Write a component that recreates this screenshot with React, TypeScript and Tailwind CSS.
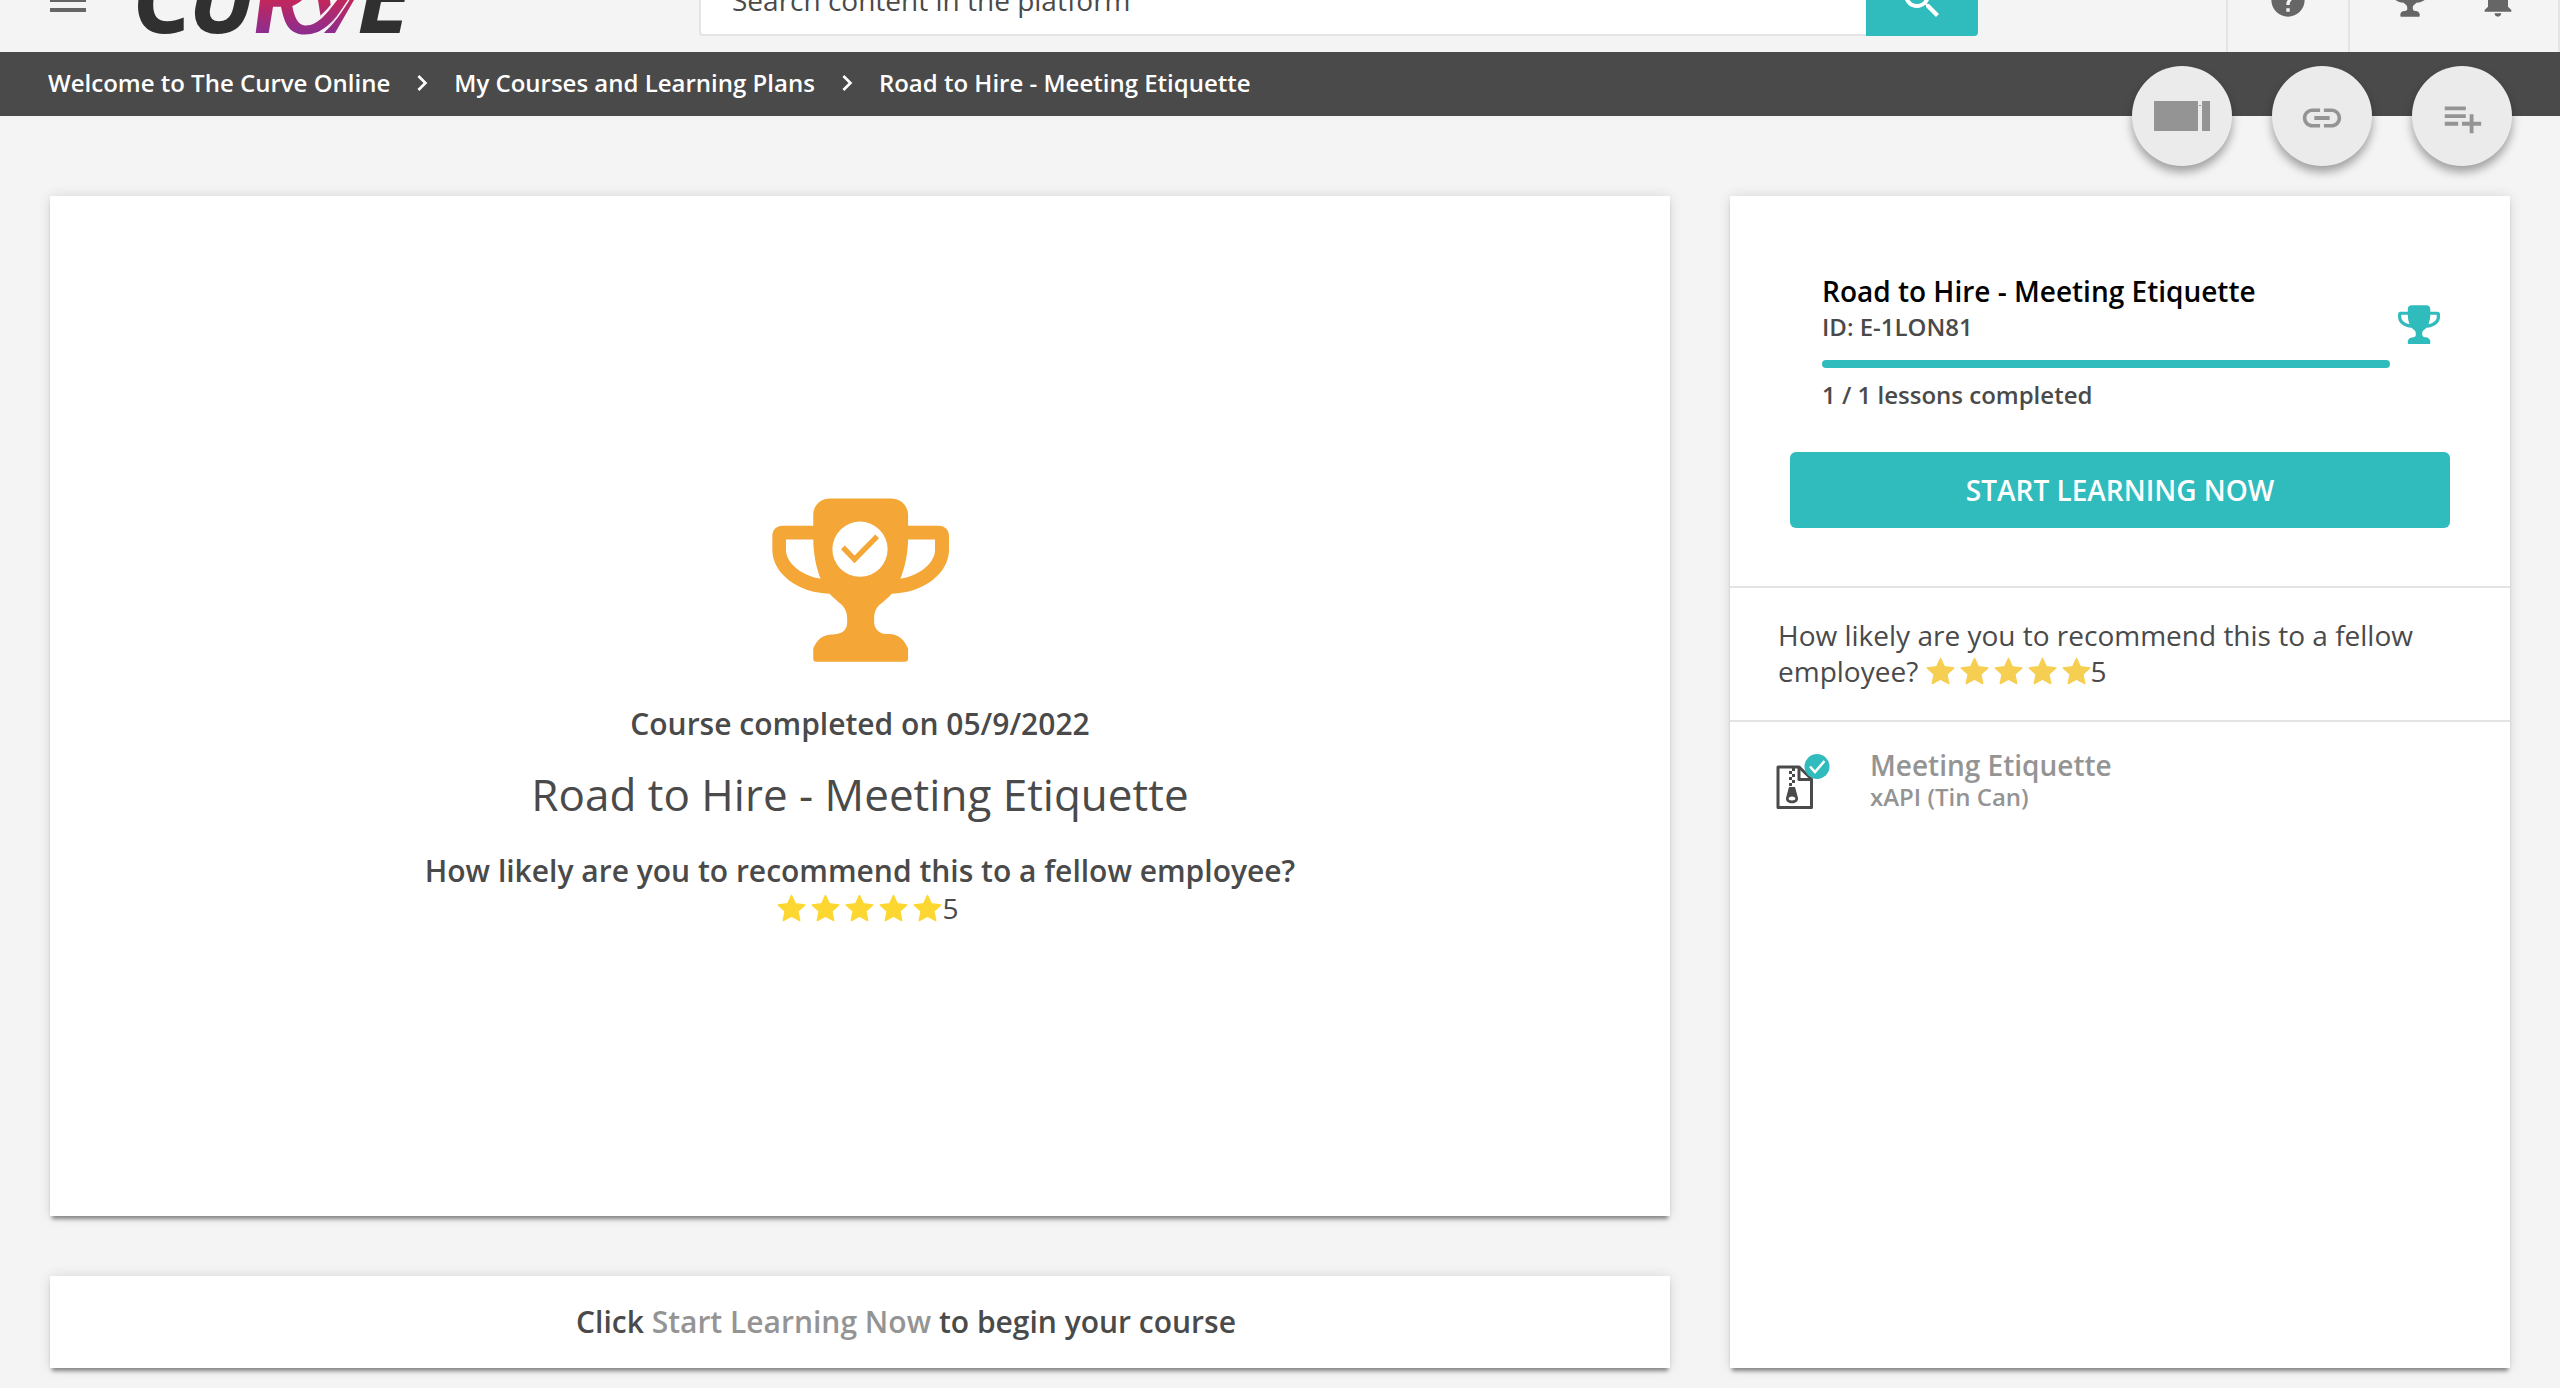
import React from "react";
import { MdMenu, MdSearch, MdHelp, MdNotifications, MdChevronRight, MdLink, MdPlaylistAdd } from "react-icons/md";

const CARD =
  "bg-white shadow-[0_5px_4px_-2px_rgba(0,0,0,0.42),0_0_12px_rgba(0,0,0,0.12)]";

function Trophy({ className, checked = false }: { className: string; checked?: boolean }) {
  return (
    <svg viewBox="94 57 532 492" className={className} fill="currentColor" aria-hidden="true">
      <path
        fillRule="evenodd"
        d="M218 140V108C218 78 240 58 270 58H450C480 58 503 78 503 108V140H596C613 140 626 153 626 170V212C626 284 548 342 454 344C442 358 428 368 418 377C405 390 401 402 401 420V430C401 450 417 465 436 465H446C473 465 492 482 503 509V540Q503 549 494 549H227Q218 549 218 540V509C229 482 248 467 275 467L288 465C308 464 320 450 320 430V420C320 402 314 388 303 377C293 368 280 358 267 344C173 342 95 284 95 212V170C95 153 108 140 125 140ZM136 181V212C136 252 182 290 240 299C226 262 219 226 218 181ZM503 181C502 226 494 262 480 299C538 290 584 252 584 212V181Z"
      />
      {checked && (
        <>
          <circle cx="358.500" cy="210.500" r="83" className="fill-white" />
          <path d="M307 205L342 241L410 172" fill="none" stroke="currentColor" strokeWidth="16" />
        </>
      )}
    </svg>
  );
}

function Rating({ score, color }: { score: number; color: string }) {
  return (
    <span className="inline-flex items-center align-top text-[28px] leading-9" aria-label={`${score} out of 5`}>
      <span className={`flex gap-[5px] ${color}`}>
        {Array.from({ length: score }, (_, i) => (
          <svg key={i} viewBox="0 0 29 28" className="h-7 w-[29px]" fill="currentColor" aria-hidden="true">
            <path
              d="M14.5 1.500L18.300 9.800L27.800 10.900L20.800 17.200L22.700 26.500L14.500 22L6.300 26.500L8.200 17.200L1.200 10.900L10.700 9.800Z"
              stroke="currentColor"
              strokeWidth="1.500"
              strokeLinejoin="round"
            />
          </svg>
        ))}
      </span>
      {score}
    </span>
  );
}

function Logo() {
  return (
    <svg viewBox="0 0 280 100" className="h-[100px] w-[280px] overflow-visible" role="img" aria-label="Curve">
      <defs>
        <linearGradient id="logoFade" gradientUnits="userSpaceOnUse" x1="0" y1="20" x2="0" y2="84">
          <stop offset="0" stopColor="#e8243c" />
          <stop offset="0.450" stopColor="#c4265a" />
          <stop offset="0.950" stopColor="#8f2d8c" />
          <stop offset="1" stopColor="#8f2d8c" />
        </linearGradient>
      </defs>
      <g className="font-['Open_Sans'] text-[100px] font-bold italic" fill="#303030">
        <text x="-8" y="83">C</text>
        <text x="48" y="83">U</text>
        <text x="217" y="83">E</text>
      </g>
      <g fill="url(#logoFade)">
        <path d="M115.700 83L125 12H147C176 12 178 46 152.300 56C154 66 158 75.500 165 75.500C178 76 188 62 197 50L216 16H228L208 50C196 68 185 84.500 165 84.500C147 84.500 144 70 141 56.700H133L128.700 83Z" />
        <path d="M172 12H185L190.700 55L180.700 67Z" />
        <path d="M184 83L204 56L228 16H236L214 50L195 83Z" />
      </g>
      <path
        d="M180 67C188 60 195 52 202 42M182 83C192 76 201 62 210 48"
        fill="none"
        stroke="#f4f4f4"
        strokeWidth="1.500"
      />
    </svg>
  );
}

function Header() {
  return (
    <header className="flex h-13 items-end overflow-hidden">
      <div className="flex h-26 flex-1 shrink-0 items-center text-[#666]">
        <div className="flex w-[699px] shrink-0 items-center pl-11">
          <button type="button" aria-label="Menu" className="mr-12">
            <MdMenu className="size-12" />
          </button>
          <a href="#home">
            <Logo />
          </a>
        </div>
        <form className="flex h-18 flex-1" role="search" onSubmit={(e) => e.preventDefault()}>
          <input
            type="search"
            aria-label="Search"
            placeholder="Search content in the platform"
            className="min-w-0 flex-1 rounded-l border-2 border-r-0 border-[#e4e4e4] bg-white pl-[31px] text-[28px] text-[#4a4a4a] placeholder:text-[#4a4a4a]"
          />
          <button type="submit" aria-label="Search" className="flex w-28 items-center justify-center rounded-r bg-[#30bbbd] text-white">
            <MdSearch className="size-12" />
          </button>
        </form>
        <div className="ml-62 flex h-full items-stretch">
          <button type="button" aria-label="Help" className="flex w-[122px] items-center justify-center border-l-2 border-[#e4e4e4]">
            <MdHelp className="size-10" />
          </button>
          <div className="flex w-53 items-center justify-center gap-12 border-x-2 border-[#e4e4e4]">
            <button type="button" aria-label="Achievements" className="flex size-10 items-center justify-center">
              <Trophy className="h-[34px] w-9" />
            </button>
            <button type="button" aria-label="Notifications">
              <MdNotifications className="size-10" />
            </button>
          </div>
        </div>
      </div>
    </header>
  );
}

function PanelIcon() {
  return (
    <svg viewBox="0 0 56 30" className="h-[30px] w-14" fill="currentColor" aria-hidden="true">
      <path d="M0 0H44V30H0ZM48 0H56V30H48ZM45 4H47V5H45Z" />
    </svg>
  );
}

function Breadcrumbs() {
  const crumbs = ["Welcome to The Curve Online", "My Courses and Learning Plans", "Road to Hire - Meeting Etiquette"];
  const actions = [
    { label: "Toggle side panel", icon: <PanelIcon /> },
    { label: "Copy link", icon: <MdLink className="mt-1 size-[46px]" /> },
    { label: "Add to playlist", icon: <MdPlaylistAdd className="mt-1 size-[46px]" /> },
  ];
  return (
    <div className="relative flex h-16 items-center bg-[#4a4a4a] pb-0.5 pl-12">
      <nav aria-label="Breadcrumb">
        <ol className="flex items-center text-2xl font-semibold text-white">
          {crumbs.map((c, i) => (
            <li key={c} className="flex items-center">
              {i > 0 && <MdChevronRight className="mx-4 size-8" />}
              <a href="#crumb">{c}</a>
            </li>
          ))}
        </ol>
      </nav>
      <div className="absolute top-3.5 right-12 flex gap-10">
        {actions.map((a) => (
          <button
            key={a.label}
            type="button"
            aria-label={a.label}
            className="flex size-25 items-center justify-center rounded-full bg-[#ebebeb] text-[#949494] shadow-[0_6px_10px_rgba(0,0,0,0.35)]"
          >
            {a.icon}
          </button>
        ))}
      </div>
    </div>
  );
}

function LessonIcon() {
  return (
    <svg viewBox="0 0 56 64" className="h-16 w-14" aria-hidden="true">
      <path d="M4 19H25L37.500 31V59.500H4Z" fill="none" stroke="#4a4a4a" strokeWidth="3" strokeLinejoin="round" />
      <path d="M25 18V31.500H38" fill="none" stroke="#4a4a4a" strokeWidth="3" strokeLinejoin="round" />
      <path d="M18 20h3v3h-3zM15 23h3v3h-3zM18 26h3v3h-3zM15 29h3v3h-3zM18 32h3v3h-3zM15 35h3v3h-3z" fill="#4a4a4a" />
      <path
        fillRule="evenodd"
        d="M15 39H21L24 50C25 57 11 57 12 50ZM18 48.500C13.500 48.500 13.500 52.500 18 52.500C22.500 52.500 22.500 48.500 18 48.500Z"
        fill="#4a4a4a"
      />
      <circle cx="43" cy="18.500" r="12.500" fill="#30bbbd" />
      <path d="M36 18.500L41 24L50.500 13" fill="none" stroke="#fff" strokeWidth="2.500" />
    </svg>
  );
}

export default function App() {
  return (
    <div className="flex min-h-screen flex-col bg-[#f4f4f4] font-['Open_Sans',sans-serif] text-[#4a4a4a]">
      <Header />
      <Breadcrumbs />
      <main className="grid flex-1 grid-cols-[1620fr_780fr] gap-15 px-[50px] pt-20 pb-5">
        <div className="flex flex-col gap-15">
          <section className={`flex flex-1 flex-col items-center justify-center pt-3 text-center ${CARD}`}>
            <Trophy checked className="h-[164px] w-[177px] text-[#f4a636]" />
            <p className="mt-[42px] text-[30px] leading-10 font-semibold">Course completed on 05/9/2022</p>
            <h1 className="mt-[18px] text-[44px] leading-16">Road to Hire - Meeting Etiquette</h1>
            <p className="mt-[26px] text-[30px] leading-[38px] font-semibold">
              How likely are you to recommend this to a fellow employee?
            </p>
            <div className="pl-4">
              <Rating score={5} color="text-[#fdd731]" />
            </div>
          </section>
          <section className={`py-6 pl-23 text-center text-[30px] leading-11 font-semibold ${CARD}`}>
            Click <a href="#start" className="text-[#949494]">Start Learning Now</a> to begin your course
          </section>
        </div>

        <aside className={CARD}>
          <div className="border-b-2 border-[#e4e4e4] px-15 pt-[77px] pb-[58px]">
            <div className="flex items-start pr-2.5 pl-8">
              <div className="flex-1">
                <h2 className="text-[28px] leading-9 font-semibold text-black">Road to Hire - Meeting Etiquette</h2>
                <p className="text-2xl leading-9 font-semibold">ID: E-1LON81</p>
                <div
                  role="progressbar"
                  aria-label="Course progress"
                  aria-valuenow={100}
                  className="mt-[15px] h-2 rounded bg-[#30bbbd]"
                />
                <p className="mt-[9px] text-2xl leading-9 font-semibold">1 / 1 lessons completed</p>
              </div>
              <Trophy className="mt-8 ml-2 h-[39px] w-[42px] text-[#30bbbd]" />
            </div>
            <button
              type="button"
              className="mt-[39px] h-19 w-full rounded-md bg-[#30bbbd] text-[28px] font-semibold text-white"
            >
              START LEARNING NOW
            </button>
          </div>
          <div className="border-b-2 border-[#e4e4e4] px-12 pt-[29px] pb-[31px] text-[28px] leading-9">
            How likely are you to recommend this to a fellow employee? <Rating score={5} color="text-[#f6cf52]" />
          </div>
          <a href="#lesson" className="flex gap-10 px-11 pt-[26px] text-[#949494]">
            <LessonIcon />
            <div className="font-semibold">
              <h3 className="text-[28px] leading-[34px]">Meeting Etiquette</h3>
              <p className="text-2xl leading-[30px]">xAPI (Tin Can)</p>
            </div>
          </a>
        </aside>
      </main>
    </div>
  );
}
